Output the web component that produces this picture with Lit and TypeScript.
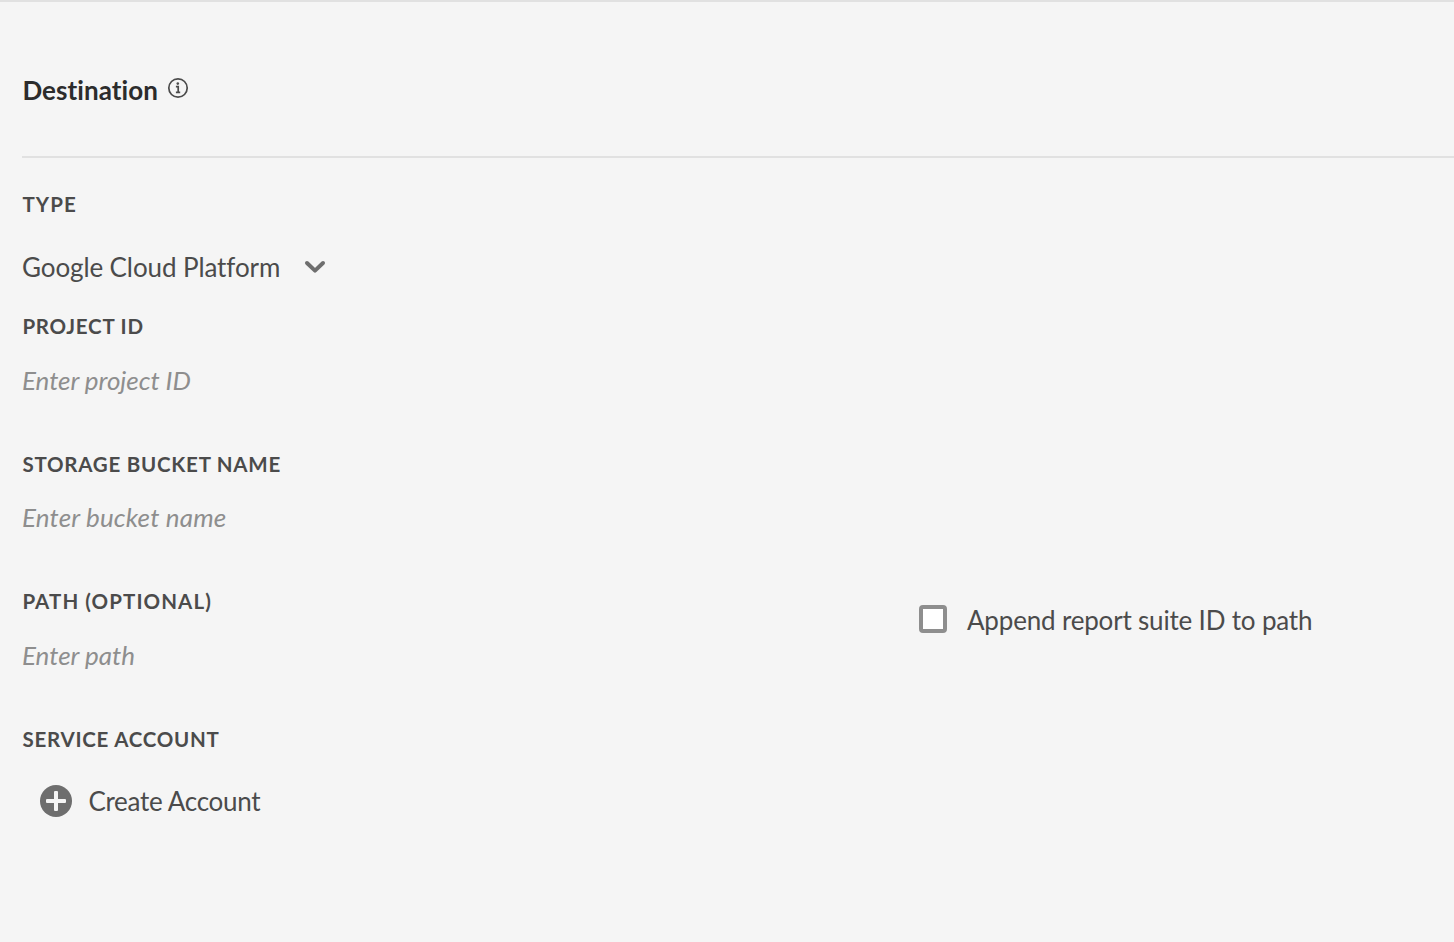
import { LitElement, html, css } from "lit";
import { customElement, property } from "lit/decorators.js";

@customElement("form-field")
export class FormField extends LitElement {
  @property() label = "";
  @property() placeholder = "";

  static styles = css`
    :host {
      display: block;
      height: 137.5px;
      white-space: nowrap;
    }
    .label {
      padding-left: 0.4px;
      font-size: 20.5px;
      line-height: 30px;
      font-weight: 700;
      letter-spacing: var(--label-spacing, 0.76px);
      color: #4b4b4b;
    }
    .placeholder {
      margin-top: 18.6px;
      line-height: 40px;
      font-style: italic;
      letter-spacing: var(--placeholder-spacing, 0.1px);
      color: #8e8e8e;
    }
    .body {
      margin-top: 19px;
    }
  `;

  render() {
    return html`
      <div class="label">${this.label}</div>
      ${this.placeholder
        ? html`<div class="placeholder">${this.placeholder}</div>`
        : html`<div class="body"><slot></slot></div>`}
    `;
  }
}

@customElement("app-root")
export class AppRoot extends LitElement {
  static styles = css`
    :host {
      display: block;
      box-sizing: border-box;
      height: 942px;
      overflow: hidden;
      padding-left: 22px;
      background: #f5f5f5;
      border-top: 2px solid #e1e1e1;
      color: #4b4b4b;
      font-family: "Lato", sans-serif;
      font-size: 26px;
      line-height: 40px;
      white-space: nowrap;
    }
    svg {
      display: block;
      flex: none;
    }
    .header {
      display: flex;
      gap: 9px;
      box-sizing: border-box;
      height: 156px;
      padding-top: 68px;
      border-bottom: 2px solid #e1e1e1;
    }
    .title {
      width: 136px;
      margin: 0;
      padding-left: 0.4px;
      box-sizing: border-box;
      font-size: 26px;
      line-height: 40px;
      font-weight: 700;
      letter-spacing: 0.07px;
      color: #2c2c2c;
      font-variant-ligatures: none;
    }
    .info {
      margin-top: 7px;
    }
    .fields {
      padding-top: 31px;
    }
    .type {
      height: 122px;
      --label-spacing: 1.1px;
    }
    .project {
      --placeholder-spacing: -0.04px;
    }
    .bucket {
      --placeholder-spacing: 0.16px;
    }
    .path {
      --label-spacing: 1.08px;
      --placeholder-spacing: 0px;
    }
    .select {
      display: flex;
      align-items: center;
      padding-top: 9px;
      letter-spacing: -0.1px;
    }
    .value {
      width: 282px;
    }
    .row {
      display: grid;
      grid-template-columns: 897px 1fr;
    }
    .check {
      display: flex;
      gap: 20px;
      padding-top: 14px;
      height: 40px;
      letter-spacing: -0.18px;
    }
    .box {
      box-sizing: border-box;
      width: 28px;
      height: 28px;
      margin-top: 5px;
      border: 4px solid #8e8e8e;
      border-radius: 4px;
      background: #fff;
    }
    .create {
      display: flex;
      align-items: center;
      gap: 16.5px;
      padding: 8px 0 0 18px;
      letter-spacing: -0.3px;
    }
  `;

  render() {
    return html`
      <div class="header">
        <h2 class="title">Destination</h2>
        <svg class="info" width="22" height="22" viewBox="0 0 22 22">
          <circle cx="11" cy="11" r="9.2" fill="none" stroke="#4b4b4b" stroke-width="1.7" />
          <circle cx="10.8" cy="6.6" r="1.3" fill="#4b4b4b" />
          <path d="M8.9 9.6h2.3v5.6M8.9 15.4h4.3" fill="none" stroke="#4b4b4b" stroke-width="1.7" />
        </svg>
      </div>
      <div class="fields">
        <form-field class="type" label="TYPE">
          <div class="select">
            <span class="value">Google Cloud Platform</span>
            <svg width="22" height="14" viewBox="0 0 22 14">
              <path d="M3 3l8 7.6L19 3" fill="none" stroke="#6e6e6e" stroke-width="4" stroke-linecap="round" stroke-linejoin="round" />
            </svg>
          </div>
        </form-field>
        <form-field class="project" label="PROJECT ID" placeholder="Enter project ID"></form-field>
        <form-field class="bucket" label="STORAGE BUCKET NAME" placeholder="Enter bucket name"></form-field>
        <div class="row">
          <form-field class="path" label="PATH (OPTIONAL)" placeholder="Enter path"></form-field>
          <div class="check">
            <span class="box"></span>
            <span>Append report suite ID to path</span>
          </div>
        </div>
        <form-field label="SERVICE ACCOUNT">
          <div class="create">
            <svg width="32" height="32" viewBox="0 0 32 32">
              <circle cx="16" cy="16" r="16" fill="#6e6e6e" />
              <rect x="14" y="6" width="4" height="20" rx="1" fill="#f5f5f5" />
              <rect x="6" y="14" width="20" height="4" rx="1" fill="#f5f5f5" />
            </svg>
            <span>Create Account</span>
          </div>
        </form-field>
      </div>
    `;
  }
}
